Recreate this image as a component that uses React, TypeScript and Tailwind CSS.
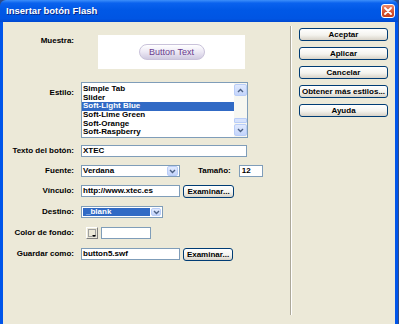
import React from 'react';

const styles = [
  'Simple Tab',
  'Slider',
  'Soft-Light Blue',
  'Soft-Lime Green',
  'Soft-Orange',
  'Soft-Raspberry',
];

const xpButton =
  'h-[13px] border border-[#003C74] rounded-[3px] bg-[linear-gradient(to_bottom,#FFFFFF,#F4F3EE_55%,#D8D3C8)] text-[8px] font-bold leading-[11px] text-black flex items-center justify-center';

const field = 'h-[12px] border border-[#7F9DB9] bg-white text-[8px] font-bold leading-[10px] pl-[1px] text-black';

const label = 'w-[71px] shrink-0 text-right text-[8px] font-bold leading-[12px] text-black';

const Chevron: React.FC<{ up?: boolean }> = ({ up }) => (
  <svg width="7" height="5" viewBox="0 0 7 5">
    <path d={up ? 'M1 4 L3.5 1.5 L6 4' : 'M1 1 L3.5 3.5 L6 1'} fill="none" stroke="#4D6185" strokeWidth="1.4" />
  </svg>
);

const ArrowBox: React.FC<{ up?: boolean; className?: string }> = ({ up, className = '' }) => (
  <div
    className={`flex items-center justify-center rounded-[2px] border border-[#B9CDF8] bg-[linear-gradient(to_bottom,#E1EAFE,#C3D4FB)] ${className}`}
  >
    <Chevron up={up} />
  </div>
);

const App: React.FC = () => {
  return (
    <div className="w-[399px] h-[324px] bg-[#2a4a8a] overflow-hidden font-['Liberation_Sans',Arial,sans-serif]">
      <div className="w-[398px] h-[324px] flex flex-col">
        {/* Title bar */}
        <div className="h-[22px] shrink-0 rounded-t-[6px] bg-[linear-gradient(to_bottom,#3D8FFA_0%,#0A62EE_14%,#0058E6_45%,#0055E3_85%,#0048D0_100%)] flex items-center justify-between pl-[6px] pr-[3px]">
          <span className="text-white text-[9.5px] font-bold leading-none [text-shadow:1px_1px_0_#0A2A8A]">
            Insertar botón Flash
          </span>
          <div className="w-[14px] h-[14px] rounded-[3px] border border-white bg-[linear-gradient(to_bottom,#EE8A6C,#D5522F_60%,#C4401F)] flex items-center justify-center">
            <svg width="8" height="8" viewBox="0 0 8 8">
              <path d="M1 1 L7 7 M7 1 L1 7" stroke="white" strokeWidth="1.8" strokeLinecap="round" />
            </svg>
          </div>
        </div>

        {/* Body */}
        <div className="flex-1 flex bg-[#ECE9D8] border-l-[3px] border-r-[3px] border-[#0055EA]">
          {/* Form */}
          <div className="w-[287px] shrink-0 pt-[13px]">
            {/* Muestra */}
            <div className="flex">
              <div className={`${label} leading-[10px]`}>Muestra:</div>
              <div className="ml-[24px] w-[147px] h-[34px] bg-white flex items-center justify-center">
                <div className="w-[66px] h-[16px] rounded-full border border-[#C9C2DA] bg-[linear-gradient(to_bottom,#FFFFFF,#ECE8F4_50%,#CFC9E0)] flex items-center justify-center text-[9px] leading-none text-[#6A3C8E]">
                  Button Text
                </div>
              </div>
            </div>

            {/* Estilo */}
            <div className="flex mt-[13px]">
              <div className={`${label} pt-[5px]`}>Estilo:</div>
              <div className="ml-[7px] w-[167px] h-[56px] border border-[#7F9DB9] bg-white flex">
                <div className="flex-1 pt-[2px] overflow-hidden">
                  {styles.map((s) => (
                    <div
                      key={s}
                      className={`h-[8.67px] text-[8px] font-bold leading-[8.67px] pl-[1px] whitespace-nowrap ${
                        s === 'Soft-Light Blue' ? 'bg-[#316AC5] text-white' : 'text-black'
                      }`}
                    >
                      {s}
                    </div>
                  ))}
                </div>
                <div className="w-[13px] shrink-0 bg-[#F7F7F1] flex flex-col">
                  <ArrowBox up className="h-[12px] mt-[1px]" />
                  <div className="flex-1 flex flex-col justify-end pb-[1px]">
                    <div className="h-[5px] rounded-[1px] border border-[#B9CDF8] bg-[#D6E2FC]" />
                  </div>
                  <ArrowBox className="h-[12px] mb-[1px]" />
                </div>
              </div>
            </div>

            {/* Texto del botón */}
            <div className="flex mt-[7px]">
              <div className={label}>Texto del botón:</div>
              <div className={`ml-[7px] w-[166px] ${field}`}>XTEC</div>
            </div>

            {/* Fuente / Tamaño */}
            <div className="flex mt-[8px]">
              <div className={label}>Fuente:</div>
              <div className={`ml-[7px] w-[99px] ${field} flex items-center justify-between pr-[1px]`}>
                <span>Verdana</span>
                <ArrowBox className="w-[11px] h-[10px]" />
              </div>
              <div className="ml-[18px] text-[8px] font-bold leading-[12px]">Tamaño:</div>
              <div className={`ml-[8px] w-[24px] ${field} pl-[2px]`}>12</div>
            </div>

            {/* Vínculo */}
            <div className="flex mt-[8px]">
              <div className={label}>Vínculo:</div>
              <div className={`ml-[7px] w-[99px] ${field}`}>http://www.xtec.es</div>
              <div className={`ml-[3px] w-[51px] ${xpButton}`}>Examinar...</div>
            </div>

            {/* Destino */}
            <div className="flex mt-[8px]">
              <div className={label}>Destino:</div>
              <div className={`ml-[7px] w-[82px] ${field} flex items-center p-[1px] gap-[1px]`}>
                <div className="flex-1 h-full bg-[#316AC5] text-white text-[8px] font-bold leading-[8px] pl-[3px]">
                  _blank
                </div>
                <ArrowBox className="w-[10px] h-full" />
              </div>
            </div>

            {/* Color de fondo */}
            <div className="flex mt-[9px]">
              <div className={label}>Color de fondo:</div>
              <div className="ml-[12px] w-[12px] h-[12px] border border-t-[#FFFFFF] border-l-[#FFFFFF] border-r-[#808080] border-b-[#808080] bg-[#ECE9D8] relative">
                <div className="absolute inset-[1px] border border-[#A0A0A0]" />
                <div className="absolute right-[1px] bottom-[1px] w-0 h-0 border-l-[2px] border-r-[2px] border-t-[2px] border-l-transparent border-r-transparent border-t-black" />
              </div>
              <div className={`ml-[3px] w-[50px] ${field}`} />
            </div>

            {/* Guardar como */}
            <div className="flex mt-[9px]">
              <div className={label}>Guardar como:</div>
              <div className={`ml-[7px] w-[99px] ${field}`}>button5.swf</div>
              <div className={`ml-[3px] w-[50px] ${xpButton}`}>Examinar...</div>
            </div>
          </div>

          {/* Separator */}
          <div className="w-[1px] shrink-0 mt-[4px] mb-[9px] bg-[#ACA899]" />
          <div className="w-[1px] shrink-0 mt-[4px] mb-[9px] bg-white" />

          {/* Buttons */}
          <div className="pl-[7px] pt-[6px] flex flex-col gap-[6px]">
            <div className={`w-[89px] ${xpButton}`}>Aceptar</div>
            <div className={`w-[89px] ${xpButton}`}>Aplicar</div>
            <div className={`w-[89px] ${xpButton}`}>Cancelar</div>
            <div className={`w-[89px] ${xpButton}`}>Obtener más estilos...</div>
            <div className={`w-[89px] ${xpButton}`}>Ayuda</div>
          </div>
        </div>
      </div>
    </div>
  );
};

export default App;
